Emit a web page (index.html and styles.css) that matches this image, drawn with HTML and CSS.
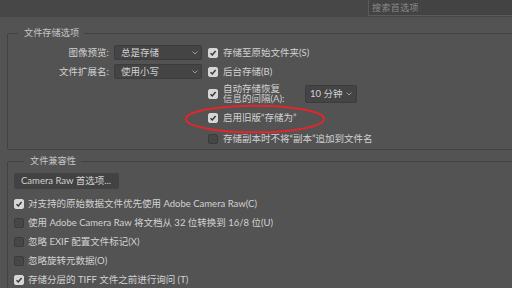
FILE: index.html
```html
<!DOCTYPE html>
<html lang="zh-CN">
<head>
<meta charset="utf-8">
<title>首选项 - 文件处理</title>
<link rel="stylesheet" href="styles.css">
</head>
<body>
<div class="topbar">
  <div class="search">搜索首选项</div>
</div>

<fieldset class="group group-save">
  <legend>文件存储选项</legend>
  <div class="save-layout">
    <div class="formats">
      <span class="field-label">图像预览:</span>
      <div class="select select-wide"><span>总是存储</span><svg class="chev" width="6" height="4" viewBox="0 0 6 4"><polyline points="0.5,0.5 3,3 5.5,0.5"/></svg></div>
      <span class="field-label">文件扩展名:</span>
      <div class="select select-wide"><span>使用小写</span><svg class="chev" width="6" height="4" viewBox="0 0 6 4"><polyline points="0.5,0.5 3,3 5.5,0.5"/></svg></div>
    </div>
    <div class="options">
      <div class="check-row row-a"><span class="box checked"><svg width="8" height="8" viewBox="0 0 8 8"><polyline points="1.5,4.2 3.3,6 6.6,2"/></svg></span><span>存储至原始文件夹(S)</span></div>
      <div class="check-row row-b"><span class="box checked"><svg width="8" height="8" viewBox="0 0 8 8"><polyline points="1.5,4.2 3.3,6 6.6,2"/></svg></span><span>后台存储(B)</span></div>
      <div class="check-row row-c"><span class="box checked"><svg width="8" height="8" viewBox="0 0 8 8"><polyline points="1.5,4.2 3.3,6 6.6,2"/></svg></span><span class="two-line">自动存储恢复<br>信息的间隔(A):</span><div class="select select-small"><span>10 分钟</span><svg class="chev" width="6" height="4" viewBox="0 0 6 4"><polyline points="0.5,0.5 3,3 5.5,0.5"/></svg></div></div>
      <div class="check-row row-d"><span class="box checked"><svg width="8" height="8" viewBox="0 0 8 8"><polyline points="1.5,4.2 3.3,6 6.6,2"/></svg></span><span>启用旧版“存储为”</span></div>
      <div class="check-row row-e"><span class="box"></span><span>存储副本时不将“副本”追加到文件名</span></div>
    </div>
  </div>
</fieldset>

<fieldset class="group group-compat">
  <legend>文件兼容性</legend>
  <div class="button">Camera Raw 首选项...</div>
  <div class="compat-list">
    <div class="check-row"><span class="box checked"><svg width="8" height="8" viewBox="0 0 8 8"><polyline points="1.5,4.2 3.3,6 6.6,2"/></svg></span><span>对支持的原始数据文件优先使用 Adobe Camera Raw(C)</span></div>
    <div class="check-row"><span class="box"></span><span>使用 Adobe Camera Raw 将文档从 32 位转换到 16/8 位(U)</span></div>
    <div class="check-row"><span class="box"></span><span>忽略 EXIF 配置文件标记(X)</span></div>
    <div class="check-row"><span class="box"></span><span>忽略旋转元数据(O)</span></div>
    <div class="check-row"><span class="box checked"><svg width="8" height="8" viewBox="0 0 8 8"><polyline points="1.5,4.2 3.3,6 6.6,2"/></svg></span><span>存储分层的 TIFF 文件之前进行询问 (T)</span></div>
  </div>
</fieldset>

<svg class="annotation" width="142" height="30" viewBox="0 0 142 30"><ellipse cx="71" cy="15" rx="69" ry="13.3"/></svg>
</body>
</html>
```

FILE: styles.css
```css
* { box-sizing: border-box; }

html, body {
  margin: 0;
  padding: 0;
}

body {
  width: 512px;
  height: 288px;
  overflow: hidden;
  position: relative;
  background: #535353;
  color: #d2d2d2;
  font-family: Lato, "Noto Sans CJK SC", sans-serif;
  font-size: 9.5px;
  line-height: 12px;
}

.topbar {
  height: 17px;
  background: #474747;
  display: flex;
  justify-content: flex-end;
}

.search {
  width: 144px;
  height: 16px;
  background: #434343;
  border-left: 1px solid #5a5a5a;
  border-bottom: 1px solid #5a5a5a;
  color: #8a8a8a;
  padding: 2px 0 0 3px;
  font-size: 9px;
  letter-spacing: 0.4px;
}

.group {
  border: 1px solid #424242;
  border-radius: 2px;
  padding: 0;
  min-width: 0;
  margin: 0 -20px 0 7px;
}

.group legend {
  margin-left: 10px;
  padding: 0 5px 0 6px;
  line-height: 12px;
  font-size: 9.2px;
  color: #c6c6c6;
}

.group-save {
  margin-top: 10px;
  padding: 4px 0 1px 0;
}

.save-layout {
  display: flex;
  gap: 6px;
}

.formats {
  width: 194px;
  flex: none;
  display: grid;
  grid-template-columns: 101px 88px;
  grid-auto-rows: 19px;
  column-gap: 5px;
  align-items: center;
  align-content: start;
}

.field-label {
  text-align: right;
}

.select {
  display: flex;
  align-items: center;
  justify-content: space-between;
  background: #444444;
  border: 1px solid #3c3c3c;
  border-radius: 2px;
  color: #d2d2d2;
  flex: none;
}

.select-wide {
  height: 15px;
  padding: 0 3px 0 6px;
}

.select-small {
  width: 52px;
  height: 18px;
  padding: 0 4px 0 4px;
}

.chev {
  flex: none;
}

.chev polyline {
  fill: none;
  stroke: #9a9a9a;
  stroke-width: 1;
}

.options {
  display: flex;
  flex-direction: column;
}

.check-row {
  display: flex;
  align-items: center;
  gap: 5px;
  white-space: nowrap;
}

.row-a, .row-b { height: 19px; }
.row-c { height: 25px; }
.row-d { height: 23px; }
.row-e { height: 19px; }

.two-line {
  line-height: 10px;
  width: 77px;
  flex: none;
}

.box {
  width: 10px;
  height: 10px;
  flex: none;
  border-radius: 2px;
  background: #474747;
  border: 1px solid #3b3b3b;
  display: flex;
  align-items: center;
  justify-content: center;
}

.box.checked {
  background: #d6d6d6;
  border-color: #d6d6d6;
}

.box svg polyline {
  fill: none;
  stroke: #3a3a3a;
  stroke-width: 1.5;
}

.group-compat {
  margin-top: 5px;
  padding: 6px 0 0 6px;
}

.button {
  width: 105px;
  height: 16px;
  background: #424242;
  border-radius: 2px;
  padding: 2px 0 0 7px;
  color: #d0d0d0;
  margin-bottom: 5px;
}

.compat-list .check-row {
  height: 19px;
  gap: 4px;
}

.annotation {
  position: absolute;
  left: 184px;
  top: 104px;
}

.annotation ellipse {
  fill: none;
  stroke: #e3262b;
  stroke-width: 2;
}
```
